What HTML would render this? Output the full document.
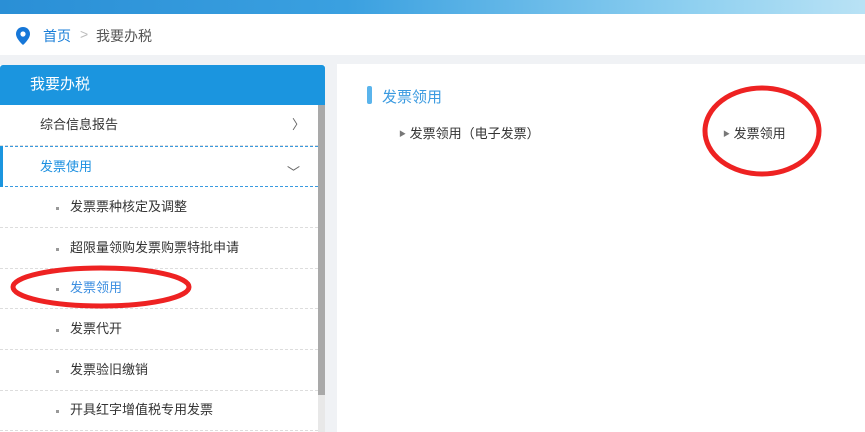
<!DOCTYPE html><html><head><meta charset="utf-8"><style>
*{margin:0;padding:0;box-sizing:border-box}
body{width:865px;height:432px;overflow:hidden;background:#f0f2f5;font-family:"Liberation Sans","Noto Sans CJK SC",sans-serif;position:relative}
.top{position:absolute;left:0;top:0;width:865px;height:14px;background:linear-gradient(90deg,#2a8fd6,#3aa0e0 40%,#8fd0f0 80%,#b9e2f5)}
.bc{position:absolute;left:0;top:14px;width:865px;height:41px;background:#fff;font-size:14px;color:#555}
.side{position:absolute;left:0;top:65px;width:325px;height:367px;background:#fff}
.sh{height:40px;background:#1b95df;color:#fff;font-size:15px;line-height:40px;padding-left:30px;border-radius:3px 3px 0 0}
.row{position:absolute;left:0;width:318px;height:41px;font-size:13px;color:#333;line-height:40px;border-bottom:1px dashed #ddd}
.sub{padding-left:70px}
.sub:before{content:"";position:absolute;left:56px;top:20px;width:3px;height:3px;background:#999}
.main{position:absolute;left:337px;top:64px;width:528px;height:368px;background:#fff}
</style></head><body>
<div class="top"><div style="position:absolute;left:20px;top:0;width:50px;height:6px;color:#c00;font-size:8px;line-height:4px">▔▔</div></div>
<div class="bc">
<svg style="position:absolute;left:16px;top:13px" width="14" height="18" viewBox="0 0 14 18"><path d="M7 0C3 0 0 3 0 7c0 5 7 11 7 11s7-6 7-11c0-4-3-7-7-7z" fill="#1677d8"/><circle cx="7" cy="7" r="2.6" fill="#fff"/></svg>
<span style="position:absolute;left:43px;top:12px;color:#1b7fd8">首页</span>
<span style="position:absolute;left:80px;top:12px;color:#bbb">&gt;</span>
<span style="position:absolute;left:96px;top:12px">我要办税</span>
</div>
<div class="side"><div class="sh">我要办税</div></div>
<div style="position:absolute;left:318px;top:105px;width:7px;height:327px;background:#e8e8e8"></div>
<div style="position:absolute;left:318px;top:105px;width:7px;height:290px;background:#a9a9a9"></div>
<div class="row" style="top:105px;padding-left:40px">综合信息报告<span style="position:absolute;left:292px;color:#666">〉</span></div>
<div class="row" style="top:146px;padding-left:40px;color:#1b8fe0;border-top:1px dashed #3a9ae0;border-bottom:1px dashed #3a9ae0"><div style="position:absolute;left:0;top:-1px;width:3px;height:41px;background:#1b95df"></div>发票使用<span style="position:absolute;left:287px;top:6px;color:#666">﹀</span></div>
<div class="row sub" style="top:187px">发票票种核定及调整</div>
<div class="row sub" style="top:228px">超限量领购发票购票特批申请</div>
<div class="row sub" style="top:268px;color:#3b8ee0">发票领用</div>
<div class="row sub" style="top:309px">发票代开</div>
<div class="row sub" style="top:350px">发票验旧缴销</div>
<div class="row sub" style="top:390px">开具红字增值税专用发票</div>
<div class="main">
<div style="position:absolute;left:30px;top:22px;width:5px;height:18px;border-radius:2px;background:#5ab4ec"></div>
<div style="position:absolute;left:45px;top:22px;font-size:15px;color:#3a9ae0">发票领用</div>
<div style="position:absolute;left:62px;top:59px;font-size:13px;color:#333"><span style="font-size:7px;color:#777;vertical-align:2px">▶</span> 发票领用（电子发票）</div>
<div style="position:absolute;left:386px;top:59px;font-size:13px;color:#333"><span style="font-size:7px;color:#777;vertical-align:2px">▶</span> 发票领用</div>
</div>
<svg style="position:absolute;left:0;top:0" width="865" height="432"><ellipse cx="101" cy="287" rx="88" ry="19" fill="none" stroke="#ee2222" stroke-width="5"/><ellipse cx="762" cy="131" rx="57" ry="43" fill="none" stroke="#ee2222" stroke-width="5"/></svg>
</body></html>
